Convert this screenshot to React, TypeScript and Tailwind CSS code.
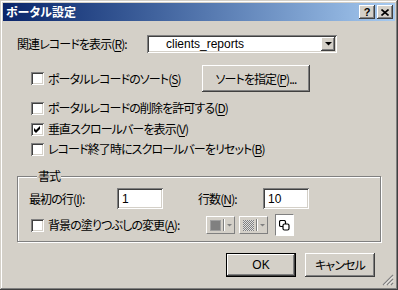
import React from "react";

const raised =
  "shadow-[inset_-1px_-1px_#404040,inset_1px_1px_#ffffff,inset_-2px_-2px_#808080,inset_2px_2px_#d4d0c8]";
const sunken =
  "shadow-[inset_1px_1px_#808080,inset_-1px_-1px_#ffffff,inset_2px_2px_#404040,inset_-2px_-2px_#d4d0c8]";

function U({ children }: { children: React.ReactNode }) {
  return <span className="underline underline-offset-2">{children}</span>;
}

function Check({ checked = false }: { checked?: boolean }) {
  return (
    <span className={`relative block size-[13px] shrink-0 bg-white ${sunken}`}>
      {checked && (
        <svg className="absolute left-0 top-0" width="13" height="13" viewBox="0 0 13 13">
          <polygon points="3,5 5,7 9,3 9,6 5,10 3,8" fill="#000" />
        </svg>
      )}
    </span>
  );
}

function CheckRow({
  checked,
  children,
  className = "",
}: {
  checked?: boolean;
  children: React.ReactNode;
  className?: string;
}) {
  return (
    <div className={`flex items-center gap-[4px] ${className}`}>
      <Check checked={checked} />
      <span>{children}</span>
    </div>
  );
}

function TitleButton({ children }: { children: React.ReactNode }) {
  return (
    <span className={`grid h-[14px] w-[16px] place-items-center bg-[#d4d0c8] ${raised}`}>
      {children}
    </span>
  );
}

function Arrow({ color = "#000", w = 7 }: { color?: string; w?: number }) {
  return (
    <svg width={w} height={Math.ceil(w / 2)} viewBox={`0 0 ${w} ${Math.ceil(w / 2)}`}>
      <polygon points={`0,0 ${w},0 ${w / 2},${w / 2}`} fill={color} />
    </svg>
  );
}

function SwatchButton({ children }: { children: React.ReactNode }) {
  return (
    <span className="flex h-[18px] items-center border border-t-white border-l-white border-r-[#808080] border-b-[#808080] pl-[3px] pr-[2px]">
      {children}
      <span className="mx-[2px] h-[12px] w-[2px] border-l border-l-[#808080] border-r border-r-white" />
      <Arrow color="#808080" w={5} />
    </span>
  );
}

export default function App() {
  return (
    <div
      className={`flex h-[290px] w-[398px] flex-col bg-[#d4d0c8] p-[3px] text-[12px] leading-[14px] tracking-[-0.9px] text-black [font-family:'Noto_Sans_CJK_JP',sans-serif] [font-feature-settings:'palt'] shadow-[inset_-1px_-1px_#404040,inset_1px_1px_#d4d0c8,inset_-2px_-2px_#808080,inset_2px_2px_#ffffff]`}
    >
      {/* title bar */}
      <div className="flex h-[18px] shrink-0 items-center justify-between bg-gradient-to-r from-[#0a246a] to-[#a6caf0] pl-[3px] pr-[2px]">
        <span className="font-bold tracking-normal text-white">ポータル設定</span>
        <div className="flex gap-[2px]">
          <TitleButton>
            <span className="text-[11px] font-bold leading-none tracking-normal [font-family:'Liberation_Sans',sans-serif]">?</span>
          </TitleButton>
          <TitleButton>
            <svg width="8" height="7" viewBox="0 0 8 7">
              <path d="M0.5 0.5 L7.5 6.5 M7.5 0.5 L0.5 6.5" stroke="#000" strokeWidth="1.6" />
            </svg>
          </TitleButton>
        </div>
      </div>

      <div className="relative flex flex-1 flex-col">
        {/* related record */}
        <div className="mt-[14px] flex h-[18px] items-center pl-[14px]">
          <span className="w-[130px]">
            関連レコードを表示(<U>R</U>):
          </span>
          <div className={`flex h-[18px] w-[190px] items-center bg-white p-[2px] ${sunken}`}>
            <span className="flex-1 pl-[17px] tracking-normal [font-family:'Liberation_Sans','Noto_Sans_CJK_JP',sans-serif]">
              clients_reports
            </span>
            <span className={`grid h-[14px] w-[14px] place-items-center bg-[#d4d0c8] ${raised}`}>
              <Arrow />
            </span>
          </div>
        </div>

        {/* sort */}
        <div className="mt-[12px] flex h-[27px] items-center pl-[28px]">
          <CheckRow className="w-[171px]">
            ポータルレコードのソート(<U>S</U>)
          </CheckRow>
          <button className={`h-[27px] w-[108px] bg-[#d4d0c8] ${raised}`}>
            ソートを指定(<U>P</U>)...
          </button>
        </div>

        <CheckRow className="mt-[9px] h-[14px] pl-[28px]">
          ポータルレコードの削除を許可する(<U>D</U>)
        </CheckRow>
        <CheckRow checked className="mt-[7px] h-[14px] pl-[28px]">
          垂直スクロールバーを表示(<U>V</U>)
        </CheckRow>
        <CheckRow className="mt-[6px] h-[14px] pl-[28px]">
          レコード終了時にスクロールバーをリセット(<U>B</U>)
        </CheckRow>

        {/* format group */}
        <fieldset className="ml-[14px] mt-[13px] h-[73px] w-[364px] border border-[#808080] pl-[11px] shadow-[1px_1px_#ffffff,inset_1px_1px_#ffffff]">
          <legend className="ml-[8px] bg-[#d4d0c8] px-[1px]">書式</legend>
          <div className="mt-[5px] flex h-[21px] items-center">
            <span className="w-[88px]">
              最初の行(<U>I</U>):
            </span>
            <span className={`flex h-[21px] w-[46px] items-center bg-white pl-[5px] tracking-normal [font-family:'Liberation_Sans',sans-serif] ${sunken}`}>
              1
            </span>
            <span className="ml-[35px] w-[65px]">
              行数(<U>N</U>):
            </span>
            <span className={`flex h-[21px] w-[46px] items-center bg-white pl-[5px] tracking-normal [font-family:'Liberation_Sans',sans-serif] ${sunken}`}>
              10
            </span>
          </div>
          <div className="mt-[5px] flex h-[22px] items-center">
            <CheckRow className="w-[177px] pl-[2px]">
              背景の塗りつぶしの変更(<U>A</U>):
            </CheckRow>
            <SwatchButton>
              <span className="size-[11px] border border-[#a0a0a0] bg-[#808080]" />
            </SwatchButton>
            <span className="ml-[4px]">
              <SwatchButton>
                <svg width="11" height="11" viewBox="0 0 11 11">
                  <defs>
                    <pattern id="chk" width="2" height="2" patternUnits="userSpaceOnUse">
                      <rect width="2" height="2" fill="#e0e0e0" />
                      <rect width="1" height="1" fill="#808080" />
                      <rect x="1" y="1" width="1" height="1" fill="#808080" />
                    </pattern>
                  </defs>
                  <rect width="11" height="11" fill="url(#chk)" />
                </svg>
              </SwatchButton>
            </span>
            <span className="ml-[7px] grid h-[22px] w-[19px] place-items-center border border-t-[#808080] border-l-[#808080] border-r-white border-b-white bg-white">
              <svg width="11" height="11" viewBox="0 0 11 11">
                <rect x="0.5" y="0.5" width="6" height="6" rx="1.5" fill="none" stroke="#000" strokeWidth="1.2" />
                <rect x="4" y="4" width="6" height="6" rx="1.5" fill="#fff" stroke="#000" strokeWidth="1.2" />
              </svg>
            </span>
          </div>
        </fieldset>

        {/* dialog buttons */}
        <div className="mt-[11px] flex justify-end gap-[9px] pr-[20px]">
          <button className={`h-[24px] w-[70px] border border-black bg-[#d4d0c8] tracking-normal [font-family:'Liberation_Sans','Noto_Sans_CJK_JP',sans-serif] ${raised}`}>
            OK
          </button>
          <button className={`h-[24px] w-[70px] bg-[#d4d0c8] ${raised}`}>
            キャンセル
          </button>
        </div>

        {/* resize grip */}
        <svg className="absolute bottom-[1px] right-[1px]" width="12" height="12" viewBox="0 0 12 12">
          <path d="M11 1 L1 11 M11 5 L5 11 M11 9 L9 11" stroke="#808080" strokeWidth="1.2" />
          <path d="M11 2.5 L2.5 11 M11 6.5 L6.5 11 M11 10.5 L10.5 11" stroke="#ffffff" strokeWidth="0.8" />
        </svg>
      </div>
    </div>
  );
}
